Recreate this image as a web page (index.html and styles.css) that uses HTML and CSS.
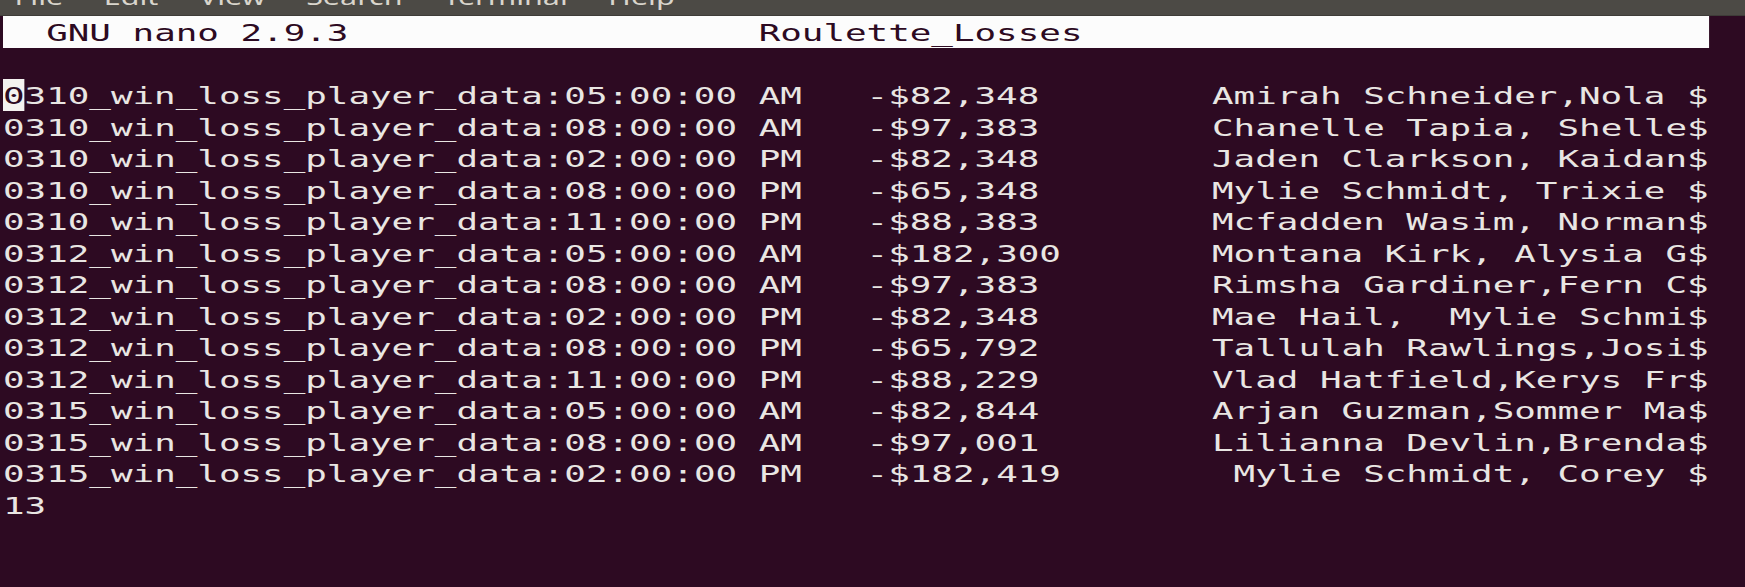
FILE: index.html
```html
<!DOCTYPE html>
<html lang="en">
<head>
<meta charset="utf-8">
<title>GNU nano 2.9.3 - Roulette_Losses</title>
<link rel="stylesheet" href="styles.css">
</head>
<body>
<div class="window">
  <div class="menubar">
    <div class="menu-inner">
      <span class="menu-item m-file">File</span>
      <span class="menu-item">Edit</span>
      <span class="menu-item">View</span>
      <span class="menu-item">Search</span>
      <span class="menu-item">Terminal</span>
      <span class="menu-item">Help</span>
    </div>
  </div>
  <div class="terminal">
    <div class="screen">
      <div class="row titlebar">
        <span class="cell t-left">  GNU nano 2.9.3</span>
        <span class="cell t-name">Roulette_Losses</span>
      </div>
      <div class="row"></div>
      <div class="row">
        <span class="cell cursor">0</span>
        <span class="cell c-time-rest">310_win_loss_player_data:05:00:00 AM</span>
        <span class="cell c-amt">-$82,348</span>
        <span class="cell c-name">Amirah Schneider,Nola $</span>
      </div>
      <div class="row">
        <span class="cell c-time">0310_win_loss_player_data:08:00:00 AM</span>
        <span class="cell c-amt">-$97,383</span>
        <span class="cell c-name">Chanelle Tapia, Shelle$</span>
      </div>
      <div class="row">
        <span class="cell c-time">0310_win_loss_player_data:02:00:00 PM</span>
        <span class="cell c-amt">-$82,348</span>
        <span class="cell c-name">Jaden Clarkson, Kaidan$</span>
      </div>
      <div class="row">
        <span class="cell c-time">0310_win_loss_player_data:08:00:00 PM</span>
        <span class="cell c-amt">-$65,348</span>
        <span class="cell c-name">Mylie Schmidt, Trixie $</span>
      </div>
      <div class="row">
        <span class="cell c-time">0310_win_loss_player_data:11:00:00 PM</span>
        <span class="cell c-amt">-$88,383</span>
        <span class="cell c-name">Mcfadden Wasim, Norman$</span>
      </div>
      <div class="row">
        <span class="cell c-time">0312_win_loss_player_data:05:00:00 AM</span>
        <span class="cell c-amt">-$182,300</span>
        <span class="cell c-name">Montana Kirk, Alysia G$</span>
      </div>
      <div class="row">
        <span class="cell c-time">0312_win_loss_player_data:08:00:00 AM</span>
        <span class="cell c-amt">-$97,383</span>
        <span class="cell c-name">Rimsha Gardiner,Fern C$</span>
      </div>
      <div class="row">
        <span class="cell c-time">0312_win_loss_player_data:02:00:00 PM</span>
        <span class="cell c-amt">-$82,348</span>
        <span class="cell c-name">Mae Hail,  Mylie Schmi$</span>
      </div>
      <div class="row">
        <span class="cell c-time">0312_win_loss_player_data:08:00:00 PM</span>
        <span class="cell c-amt">-$65,792</span>
        <span class="cell c-name">Tallulah Rawlings,Josi$</span>
      </div>
      <div class="row">
        <span class="cell c-time">0312_win_loss_player_data:11:00:00 PM</span>
        <span class="cell c-amt">-$88,229</span>
        <span class="cell c-name">Vlad Hatfield,Kerys Fr$</span>
      </div>
      <div class="row">
        <span class="cell c-time">0315_win_loss_player_data:05:00:00 AM</span>
        <span class="cell c-amt">-$82,844</span>
        <span class="cell c-name">Arjan Guzman,Sommer Ma$</span>
      </div>
      <div class="row">
        <span class="cell c-time">0315_win_loss_player_data:08:00:00 AM</span>
        <span class="cell c-amt">-$97,001</span>
        <span class="cell c-name">Lilianna Devlin,Brenda$</span>
      </div>
      <div class="row">
        <span class="cell c-time">0315_win_loss_player_data:02:00:00 PM</span>
        <span class="cell c-amt">-$182,419</span>
        <span class="cell c-name"> Mylie Schmidt, Corey $</span>
      </div>
      <div class="row">
        <span class="cell c-time">13</span>
      </div>
    </div>
  </div>
</div>
</body>
</html>
```

FILE: styles.css
```css
html, body {
  margin: 0;
  padding: 0;
  background: #2d0a22;
}

.window {
  width: 1745px;
  height: 587px;
  overflow: hidden;
  background: #2d0a22;
}

/* top menu bar, mostly cropped off as in the screenshot */
.menubar {
  height: 15px;
  background: #4c4a45;
  border-bottom: 1px solid #3e3c38;
  overflow: hidden;
}

.menu-inner {
  display: flex;
  gap: 28px;
  margin-top: -15px;
  padding-left: 10px;
  transform: scaleX(1.45);
  transform-origin: 0 0;
  font-family: "Noto Sans", "Liberation Sans", sans-serif;
  font-size: 21px;
  line-height: 24px;
  color: #d9d5cc;
}

/* terminal area */
.terminal {
  padding-left: 3px;
}

.screen {
  width: 79ch;
  font-family: "DejaVu Sans Mono", "Liberation Mono", monospace;
  font-size: 23.5px;
  color: #e9e6e3;
  transform: scaleX(1.526);
  transform-origin: 0 0;
}

.row {
  display: flex;
  height: 31.5px;
}

.cell {
  display: block;
  white-space: pre;
  padding-top: 3px;
  line-height: 28.5px;
  box-sizing: border-box;
}

.titlebar {
  background: #fcfcfc;
  color: #2d0a22;
}

.t-left { width: 35ch; }
.t-name { width: 44ch; }

.cursor {
  width: 1ch;
  background: #f4f2f0;
  color: #2d0a22;
}

.c-time-rest { width: 39ch; }
.c-time { width: 40ch; }
.c-amt { width: 16ch; }
.c-name { width: 23ch; }
```
